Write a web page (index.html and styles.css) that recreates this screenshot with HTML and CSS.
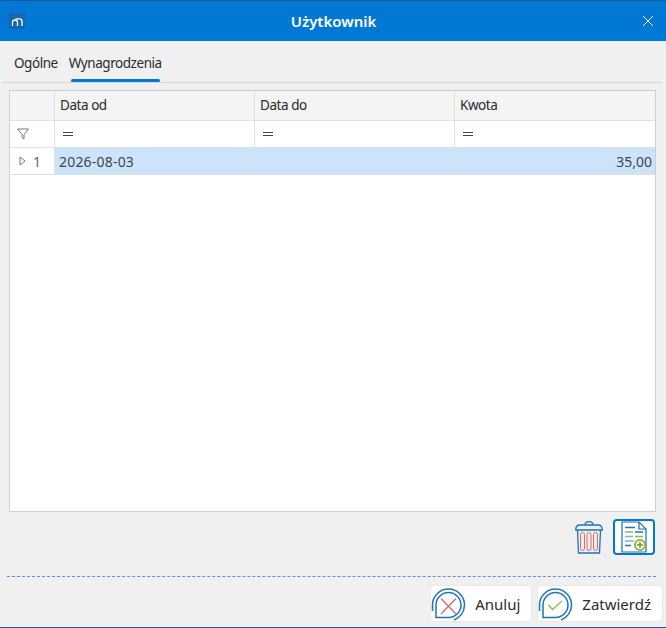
FILE: index.html
```html
<!DOCTYPE html>
<html lang="pl">
<head>
    <meta charset="UTF-8">
    <title>Użytkownik</title>
    <link rel="stylesheet" href="styles.css">
</head>
<body>
    <div class="dialog">
        <div class="title-bar">
            <div class="app-logo">
                <svg width="16" height="16" viewBox="0 0 16 16" fill="none" stroke="#fff" stroke-width="1.3">
                    <path d="M3.500 13V9.500Q3.500 7 6 7Q8.500 7 8.500 9.500V13"/>
                    <path d="M6.500 5.800H10.500Q13 5.800 13 8.300V13"/>
                </svg>
            </div>
            <div class="dialog-title">Użytkownik</div>
            <svg class="close-icon" width="12" height="12" viewBox="0 0 12 12" stroke="#fff" stroke-width="1">
                <path d="M1 1L11 11M11 1L1 11"/>
            </svg>
        </div>

        <div class="tabs">
            <div class="tab">Ogólne</div>
            <div class="tab tab-active">Wynagrodzenia</div>
        </div>

        <div class="grid">
            <div class="grid-row grid-header">
                <div class="cell cell-indicator"></div>
                <div class="cell">Data od</div>
                <div class="cell">Data do</div>
                <div class="cell cell-last">Kwota</div>
            </div>
            <div class="grid-row grid-filter">
                <div class="cell cell-indicator">
                    <svg class="filter-icon" width="12" height="12" viewBox="0 0 12 12" fill="none" stroke="#777">
                        <path d="M0.500 1H11.500L7 6.500V11L5 9.500V6.500Z"/>
                    </svg>
                </div>
                <div class="cell"><span class="equals"></span></div>
                <div class="cell"><span class="equals"></span></div>
                <div class="cell cell-last"><span class="equals"></span></div>
            </div>
            <div class="grid-row grid-data">
                <div class="cell cell-indicator row-number">
                    <svg width="7" height="10" viewBox="0 0 7 10" fill="none" stroke="#777">
                        <path d="M1 1L6 5L1 9Z"/>
                    </svg>
                    <span>1</span>
                </div>
                <div class="cell cell-selected">2026-08-03</div>
                <div class="cell cell-selected"></div>
                <div class="cell cell-selected cell-last cell-number">35,00</div>
            </div>
        </div>

        <div class="grid-actions">
            <button class="icon-btn" type="button" aria-label="Usuń">
                <svg width="28" height="33" viewBox="0 0 28 33" fill="none">
                    <path d="M10 4Q10 0.700 14 0.700Q18 0.700 18 4" stroke="#1b75bb" stroke-width="1.300"/>
                    <path d="M0.700 9Q0.700 4 5 4H23Q27.300 4 27.300 9Z" stroke="#1b75bb" stroke-width="1.300"/>
                    <path d="M2.500 9L3.500 32H24.500L25.500 9" stroke="#1b75bb" stroke-width="1.300"/>
                    <rect x="5.500" y="11.500" width="4" height="18" rx="2" fill="#f8e8e8" stroke="#cf6f6f"/>
                    <rect x="12" y="11.500" width="4" height="18" rx="2" fill="#f8e8e8" stroke="#cf6f6f"/>
                    <rect x="18.500" y="11.500" width="4" height="18" rx="2" fill="#f8e8e8" stroke="#cf6f6f"/>
                </svg>
            </button>
            <button class="icon-btn icon-btn-active" type="button" aria-label="Dodaj">
                <svg width="28" height="32" viewBox="0 0 28 32" fill="none">
                    <path d="M2 1H19L26 8V31H2Z" fill="#fff" stroke="#1b6fb0" stroke-width="1.200"/>
                    <path d="M19 1V8H26" stroke="#1b6fb0" stroke-width="1.200"/>
                    <path d="M5 6.500H15" stroke="#1b75bb" stroke-width="1.500"/>
                    <path d="M5 11H13" stroke="#8dbb3c" stroke-width="1.500"/>
                    <path d="M15 11H23" stroke="#1b75bb" stroke-width="1.500"/>
                    <path d="M5 15.500H13" stroke="#7fb2dc" stroke-width="1.500"/>
                    <path d="M15 15.500H23" stroke="#8dbb3c" stroke-width="1.500"/>
                    <path d="M5 20H14" stroke="#7fb2dc" stroke-width="1.500"/>
                    <path d="M5 24.500H11" stroke="#1b75bb" stroke-width="1.500"/>
                    <circle cx="20" cy="24" r="5" fill="#fff" stroke="#8dbb3c" stroke-width="2"/>
                    <path d="M17 24H23M20 21V27" stroke="#6f9f2a" stroke-width="1.500"/>
                </svg>
            </button>
        </div>

        <div class="separator"></div>

        <div class="footer">
            <button class="btn" type="button">
                <svg width="36" height="36" viewBox="0 0 36 36" fill="none">
                    <path d="M1.500 25V19A16 16 0 0 1 33.500 19A16 16 0 0 1 23 34" stroke="#1b75bb" stroke-width="1.500"/>
                    <path d="M5 31.500V19A12.500 12.500 0 1 1 17.500 31.500Z" stroke="#1b75bb" stroke-width="1.500"/>
                    <path d="M10 12.500L25 28M25 12.500L10 28" stroke="#d9686a" stroke-width="1.300"/>
                </svg>
                <span>Anuluj</span>
            </button>
            <button class="btn" type="button">
                <svg width="36" height="36" viewBox="0 0 36 36" fill="none">
                    <path d="M1.500 25V19A16 16 0 0 1 33.500 19A16 16 0 0 1 23 34" stroke="#1b75bb" stroke-width="1.500"/>
                    <path d="M5 31.500V19A12.500 12.500 0 1 1 17.500 31.500Z" stroke="#1b75bb" stroke-width="1.500"/>
                    <path d="M10.500 19L14.500 23.500L24 15" stroke="#8dc04a" stroke-width="1.300"/>
                </svg>
                <span>Zatwierdź</span>
            </button>
        </div>
    </div>
</body>
</html>
```

FILE: styles.css
```css
html, body {
    margin: 0;
    padding: 0;
}

body {
    font-family: "Noto Sans", "Open Sans", sans-serif;
    font-size: 13.5px;
    letter-spacing: -0.45px;
    color: #2b2b2b;
    background-color: #f0f0f0;
}

.dialog {
    width: 666px;
    height: 628px;
    box-sizing: border-box;
    display: flex;
    flex-direction: column;
    background-color: #f0f0f0;
    border-bottom: 1px solid #1f5a8c;
}

.title-bar {
    height: 41px;
    box-sizing: border-box;
    flex: none;
    display: flex;
    align-items: center;
    padding: 0 12px 0 9px;
    background-color: #0078d4;
    border-top: 1px solid #1f5a8c;
    color: white;
}

.app-logo {
    width: 16px;
    height: 16px;
    background-color: #1666b0;
    border-radius: 3px;
}

.app-logo svg {
    display: block;
}

.dialog-title {
    flex: 1;
    text-align: center;
    font-size: 15px;
    font-weight: 600;
    letter-spacing: 0;
}

.close-icon {
    display: block;
}

.tabs {
    height: 42px;
    box-sizing: border-box;
    flex: none;
    display: flex;
    align-items: flex-end;
    gap: 11px;
    margin: 0 4px 0 2px;
    padding-left: 12px;
    border-bottom: 1px solid #d6d6d6;
}

.tab {
    height: 41px;
    box-sizing: border-box;
    padding-top: 13px;
    position: relative;
}

.tab-active::after {
    content: "";
    position: absolute;
    left: 2px;
    right: 2px;
    bottom: 0;
    height: 3px;
    border-radius: 2px;
    background-color: #0078d4;
}

.grid {
    height: 422px;
    box-sizing: border-box;
    flex: none;
    margin: 7px 10px 0 9px;
    background-color: white;
    border: 1px solid #cfcfcf;
}

.grid-row {
    display: grid;
    grid-template-columns: 45px 200px 200px 1fr;
    box-sizing: border-box;
    border-bottom: 1px solid #e0e0e0;
}

.grid-header {
    height: 30px;
    background-color: #f4f4f4;
}

.grid-header .cell {
    padding-bottom: 2px;
}

.grid-filter {
    height: 27px;
}

.grid-data {
    height: 27px;
    font-size: 14px;
    letter-spacing: 0.2px;
    color: #444;
}

.cell {
    display: flex;
    align-items: center;
    padding: 0 5px;
    border-right: 1px solid #e0e0e0;
    min-width: 0;
}

.cell-last {
    border-right: none;
}

.cell-indicator {
    padding: 0;
    justify-content: center;
}

.filter-icon {
    margin-right: 18px;
}

.row-number {
    justify-content: flex-start;
    gap: 7px;
    padding-left: 9px;
    color: #666;
    background-color: white;
}

.cell-selected {
    background-color: #cce4fb;
    padding-left: 4px;
}

.cell-number {
    justify-content: flex-end;
    padding-right: 3px;
    letter-spacing: 0;
}

.equals {
    display: block;
    width: 10px;
    height: 4px;
    box-sizing: border-box;
    margin-left: 3.4px;
    border-top: 1px solid #444;
    border-bottom: 1px solid #444;
}

.grid-actions {
    flex: none;
    display: flex;
    justify-content: flex-end;
    align-items: center;
    gap: 3px;
    margin: 7px 11px 0 0;
}

.icon-btn {
    width: 42px;
    height: 36px;
    padding: 0;
    display: flex;
    align-items: center;
    justify-content: center;
    background: none;
    border: none;
}

.icon-btn-active {
    background-color: white;
    border: 2px solid #0078d4;
    border-radius: 4px;
}

.separator {
    flex: none;
    margin: 21px 10px 0 7px;
    border-top: 1px dashed #5b8def;
}

.footer {
    flex: 1;
    display: flex;
    justify-content: flex-end;
    align-items: flex-start;
    gap: 5px;
    padding: 8px 3px 0 0;
}

.btn {
    height: 37px;
    padding: 0 11px 0 0;
    display: flex;
    align-items: center;
    gap: 8px;
    font-family: inherit;
    font-size: 15px;
    letter-spacing: 0;
    color: #2b2b2b;
    background-color: white;
    border: 1px solid #e8e8e8;
    border-radius: 4px;
}
```
